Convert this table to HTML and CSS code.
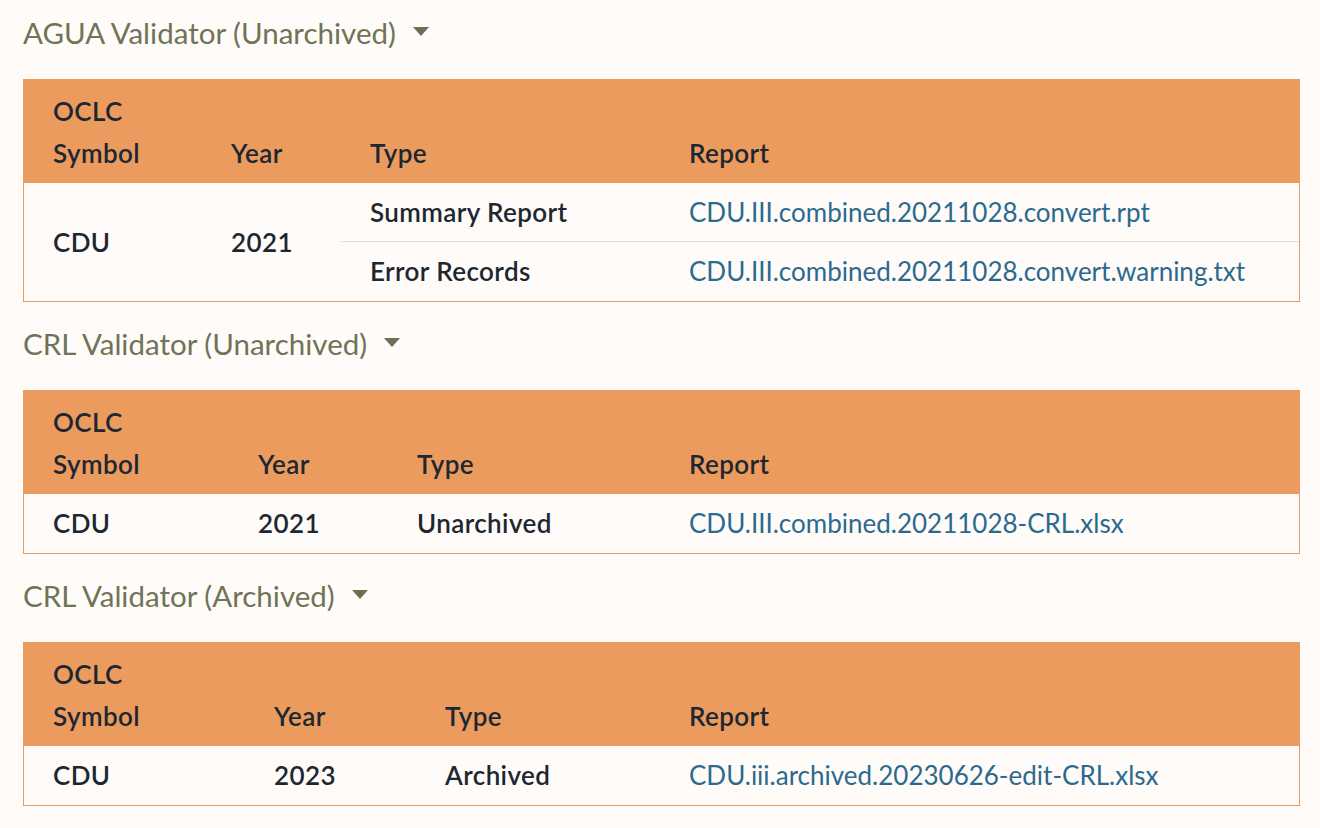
FILE: index.html
```html
<!DOCTYPE html>
<html lang="en">
<head>
<meta charset="utf-8">
<title>Validator Reports</title>
<link rel="stylesheet" href="styles.css">
</head>
<body>
<main class="page">
  <details class="section" open>
    <summary class="section-title">AGUA Validator (Unarchived)<span class="caret"></span></summary>
    <table class="report-table">
      <colgroup><col class="t1-c1"><col class="t1-c2"><col class="t1-c3"><col></colgroup>
      <thead>
        <tr><th>OCLC<br>Symbol</th><th>Year</th><th>Type</th><th>Report</th></tr>
      </thead>
      <tbody>
        <tr>
          <td rowspan="2" class="strong">CDU</td>
          <td rowspan="2" class="strong">2021</td>
          <td class="strong sep">Summary Report</td>
          <td class="sep"><a href="#">CDU.III.combined.20211028.convert.rpt</a></td>
        </tr>
        <tr>
          <td class="strong">Error Records</td>
          <td><a href="#">CDU.III.combined.20211028.convert.warning.txt</a></td>
        </tr>
      </tbody>
    </table>
  </details>

  <details class="section" open>
    <summary class="section-title">CRL Validator (Unarchived)<span class="caret"></span></summary>
    <table class="report-table">
      <colgroup><col class="t2-c1"><col class="t2-c2"><col class="t2-c3"><col></colgroup>
      <thead>
        <tr><th>OCLC<br>Symbol</th><th>Year</th><th>Type</th><th>Report</th></tr>
      </thead>
      <tbody>
        <tr>
          <td class="strong">CDU</td>
          <td class="strong">2021</td>
          <td class="strong">Unarchived</td>
          <td><a href="#">CDU.III.combined.20211028-CRL.xlsx</a></td>
        </tr>
      </tbody>
    </table>
  </details>

  <details class="section" open>
    <summary class="section-title">CRL Validator (Archived)<span class="caret"></span></summary>
    <table class="report-table">
      <colgroup><col class="t3-c1"><col class="t3-c2"><col class="t3-c3"><col></colgroup>
      <thead>
        <tr><th>OCLC<br>Symbol</th><th>Year</th><th>Type</th><th>Report</th></tr>
      </thead>
      <tbody>
        <tr>
          <td class="strong">CDU</td>
          <td class="strong">2023</td>
          <td class="strong">Archived</td>
          <td><a href="#">CDU.iii.archived.20230626-edit-CRL.xlsx</a></td>
        </tr>
      </tbody>
    </table>
  </details>
</main>
</body>
</html>
```
FILE: styles.css
```css
html, body {
  margin: 0;
  padding: 0;
  background: #fffbf8;
}
body {
  font-family: Lato, "Open Sans", sans-serif;
  color: #1d2731;
}
.page {
  padding: 12px 20px 0 23px;
}
.section {
  margin: 0 0 21px 0;
}
.section-title {
  list-style: none;
  display: flex;
  align-items: center;
  font-size: 29.5px;
  line-height: 42px;
  color: #6f7456;
  cursor: pointer;
  margin-bottom: 25px;
}
.section-title::-webkit-details-marker { display: none; }
.caret {
  display: inline-block;
  width: 0;
  height: 0;
  margin-left: 17px;
  margin-top: -4px;
  border-left: 8px solid transparent;
  border-right: 8px solid transparent;
  border-top: 9px solid #6b6f54;
}
.report-table {
  width: 100%;
  table-layout: fixed;
  border-collapse: separate;
  border-spacing: 0;
  border: 1px solid #ec9b5f;
  font-size: 26px;
}
.report-table th {
  background: #ec9b5f;
  text-align: left;
  font-weight: 600;
  letter-spacing: 0.4px;
  line-height: 42px;
  padding: 10px 29px 9px;
  vertical-align: bottom;
}
.report-table td {
  line-height: 36px;
  padding: 11px 29px 12px;
  vertical-align: middle;
  white-space: nowrap;
}
.report-table td.sep {
  padding-bottom: 11px;
  border-bottom: 1px solid #dfe1e4;
}
.report-table td.strong {
  font-weight: 600;
  letter-spacing: 0.4px;
}
.report-table a {
  color: #2b6a8f;
  text-decoration: none;
}
.t1-c1 { width: 178px; }
.t1-c2 { width: 139px; }
.t1-c3 { width: 319px; }
.t2-c1 { width: 205px; }
.t2-c2 { width: 159px; }
.t2-c3 { width: 272px; }
.t3-c1 { width: 221px; }
.t3-c2 { width: 171px; }
.t3-c3 { width: 244px; }
```
